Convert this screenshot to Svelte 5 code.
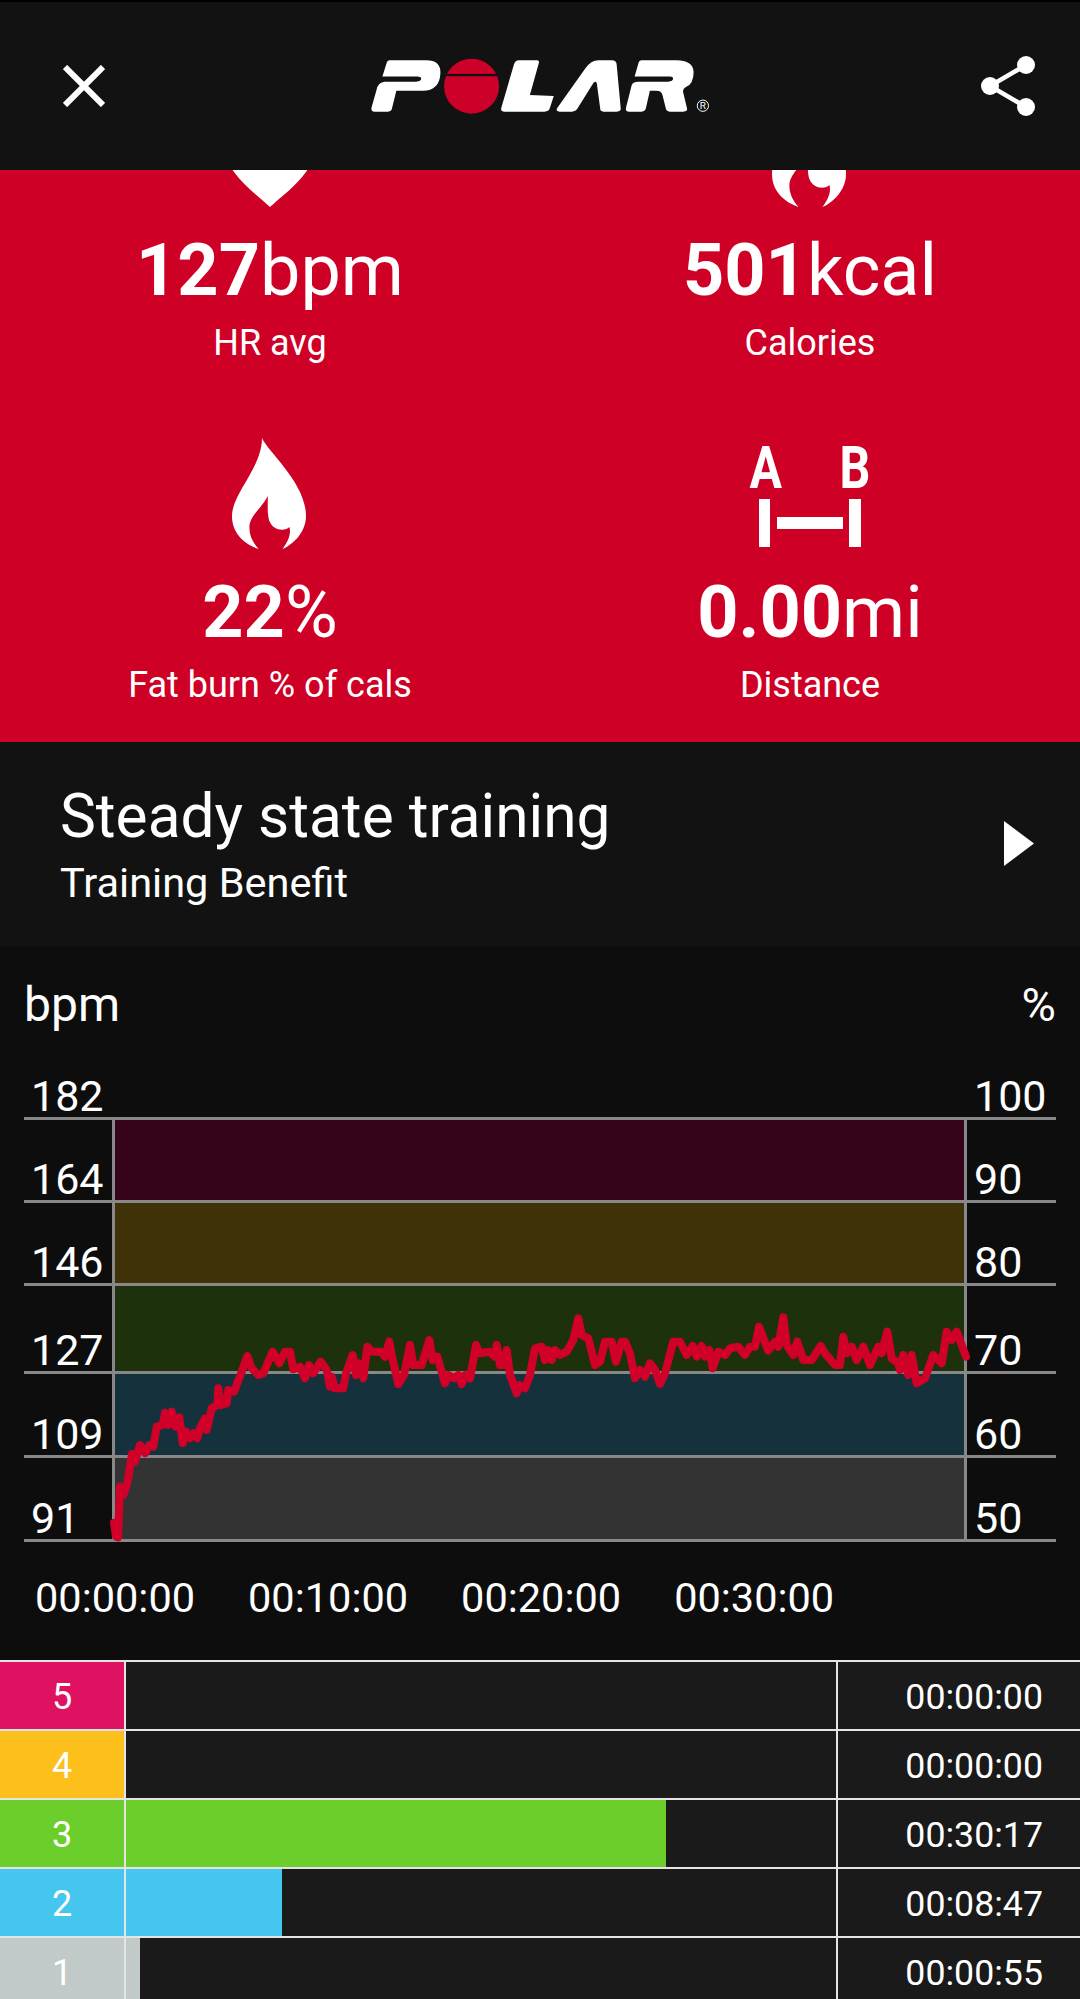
<script>
  const trace = (ox, oy, pts) => pts.map(([x, y]) => `${(ox + x / 3).toFixed(1)},${(oy + y / 3).toFixed(1)}`);
  const line = [
    ...trace(110, 1330, [[12,578],[18,620],[24,622],[30,470],[40,495],[52,460],[66,372],[75,395],[90,345],[105,370],[118,345],[130,350],[140,290],[158,285],[165,248],[175,285],[185,245],[197,290],[208,262],[218,340],[228,305],[240,325],[250,310],[262,325],[270,295],[285,265],[290,300],[305,235],[322,225],[325,175],[333,225],[350,220],[355,180],[372,185],[395,125],[412,78],[425,115],[445,135],[460,130],[488,65],[508,100],[525,65],[540,65],[550,118],[570,110],[585,145],[597,105],[610,130],[632,95],[650,120],[660,170]]),
    ...trace(330, 1310, [[5,200],[15,235],[40,235],[48,190],[68,135],[78,195],[88,160],[100,205],[112,110],[125,125],[155,125],[165,140],[178,95],[188,150],[205,222],[222,195],[240,105],[250,165],[275,165],[298,90],[308,150],[322,140],[345,220],[355,195],[372,205],[385,195],[395,222],[405,195],[420,205],[438,105],[448,130],[478,125],[495,140],[500,105],[510,165],[520,165],[530,120],[540,195],[560,250],[568,225],[585,235],[600,195],[615,115],[635,110],[645,150],[655,120],[665,150],[675,120],[690,135],[710,125],[730,90],[745,25],[755,75],[775,85],[795,165],[810,155],[825,95],[845,95],[858,155],[875,95],[885,95],[900,130],[915,205],[930,180],[945,200],[960,160]]),
    ...trace(650, 1310, [[15,180],[30,222],[45,190],[70,95],[90,95],[110,135],[128,108],[140,140],[155,108],[165,140],[178,120],[188,175],[205,125],[225,135],[240,115],[265,110],[285,135],[300,110],[315,110],[327,50],[355,122],[375,95],[385,110],[400,22],[410,105],[430,135],[442,95],[460,150],[485,150],[512,108],[525,130],[555,165],[570,165],[580,80],[590,130],[605,110],[620,150],[640,110],[660,165],[685,110],[695,130],[712,65],[725,145],[745,160],[750,180],[760,135],[775,195],[785,135],[800,220],[825,205],[850,135],[875,160],[890,65],[905,90],[920,65],[948,140]])
  ].join(' ');

  const bands = [
    { left: '164', right: '90', color: '#35041a', h: 83 },
    { left: '146', right: '80', color: '#3f3209', h: 83 },
    { left: '127', right: '70', color: '#1c310c', h: 88 },
    { left: '109', right: '60', color: '#14313c', h: 84 },
    { left: '91', right: '50', color: '#333333', h: 84 }
  ];
  const ticks = ['00:00:00', '00:10:00', '00:20:00', '00:30:00'];
  const zones = [
    { n: 5, color: '#de1260', pct: 0, time: '00:00:00' },
    { n: 4, color: '#fcbf1c', pct: 0, time: '00:00:00' },
    { n: 3, color: '#6cce2a', pct: 76, time: '00:30:17' },
    { n: 2, color: '#45c6ef', pct: 22, time: '00:08:47' },
    { n: 1, color: '#c2cac9', pct: 2, time: '00:00:55' }
  ];
  const flame = 'M30 0C36 14 74 45 74 78C74 95 60 107 50.5 111C57 102 59 96 57.5 89C54 93 41 94 37 82C35 74 36 66 35.8 58C30 70 17 78 17.4 90C17.5 98 21 105 26.6 111C12 106 0 95 0 78C0 55 30 30 30 0Z';
  const heart = 'M50 111C38 100 24 90 14 76C0 55 0 30 20 20C35 14 45 22 50 30C55 22 65 14 80 20C100 30 100 55 86 76C76 90 62 100 50 111Z';
</script>

<div class="page">
  <header class="top">
    <svg class="close" viewBox="0 0 42 42" aria-label="Close">
      <path d="M2 2L40 40M40 2L2 40" />
    </svg>
    <svg class="logo" viewBox="85 50 1030 175" aria-label="Polar">
      <path class="w" d="M145 60L255 60Q300 60 298 100Q295 152 245 152L165 152L152 205Q150 215 140 215L100 215Q88 215 90 203L105 150Q110 126 130 125L225 125Q240 123 240 116Q240 109 228 109L123 109L135 70Q138 60 145 60Z" />
      <circle class="o" cx="392" cy="138" r="83" />
      <rect class="slit" x="300" y="101" width="180" height="7" />
      <path class="w" d="M535 60L590 60Q597 60 595 68L568 165L640 168L628 205Q625 215 612 215L492 215Q478 215 482 202L520 72Q524 60 535 60Z" />
      <path class="w" d="M650 205L735 85Q752 60 775 60L815 60Q830 60 830 75L842 205Q843 215 830 215L790 215Q780 215 780 205L770 130Q768 120 760 128L712 205Q706 215 695 215L658 215Q645 215 650 205Z" />
      <path class="w" d="M905 60L1010 60Q1060 60 1062 95Q1062 130 1040 140Q1030 145 1030 155L1042 205Q1045 215 1030 215L990 215Q980 215 978 205L968 165Q965 152 950 152L930 152L918 205Q915 215 905 215L868 215Q855 215 858 203L875 135Q880 125 895 125L985 125Q1000 123 1000 116Q1000 109 990 109L884 109L895 70Q898 60 905 60Z" />
      <circle class="reg" cx="1090" cy="197" r="17" />
      <text class="regt" x="1090" y="208" text-anchor="middle">R</text>
    </svg>
    <svg class="share" viewBox="0 0 54 60" aria-label="Share">
      <path d="M45 9L9 30L45 51" />
      <circle cx="45" cy="9" r="9" />
      <circle cx="9" cy="30" r="9" />
      <circle cx="45" cy="51" r="9" />
    </svg>
  </header>

  <section class="stats">
    <div class="grid">
      <div class="stat">
        <div class="icon"><svg width="100" height="111" viewBox="0 0 100 111"><path d={heart} /></svg></div>
        <div class="val"><b>127</b>bpm</div>
        <div class="lab">HR avg</div>
      </div>
      <div class="stat">
        <div class="icon"><svg class="fl" width="74" height="111" viewBox="0 0 74 111"><path d={flame} /></svg></div>
        <div class="val"><b>501</b>kcal</div>
        <div class="lab">Calories</div>
      </div>
      <div class="stat">
        <div class="icon"><svg class="fl" width="74" height="111" viewBox="0 0 74 111"><path d={flame} /></svg></div>
        <div class="val"><b>22</b>%</div>
        <div class="lab">Fat burn % of cals</div>
      </div>
      <div class="stat">
        <div class="icon ab">
          <div class="abt"><span>A</span><span>B</span></div>
          <svg width="102" height="48" viewBox="0 0 102 48">
            <rect x="0" y="0" width="11" height="48" />
            <rect x="18" y="18" width="66" height="12" />
            <rect x="90" y="0" width="12" height="48" />
          </svg>
        </div>
        <div class="val"><b>0.00</b>mi</div>
        <div class="lab">Distance</div>
      </div>
    </div>
  </section>

  <section class="benefit">
    <div>
      <div class="title">Steady state training</div>
      <div class="sub">Training Benefit</div>
    </div>
    <svg class="play" width="30" height="45" viewBox="0 0 30 45"><path d="M0 0L30 22.5L0 45Z" /></svg>
  </section>

  <section class="chart">
    <div class="units"><span>bpm</span><span class="pc">%</span></div>
    <div class="plot">
      <div class="head"><span>182</span><span class="r">100</span></div>
      {#each bands as b}
        <div class="row" style:height="{b.h}px">
          <span class="l">{b.left}</span>
          <div class="band" style:background={b.color}></div>
          <span class="l rr">{b.right}</span>
        </div>
      {/each}
      <svg class="trace" width="870" height="250" viewBox="110 1300 870 250">
        <polyline points={line} />
      </svg>
    </div>
    <div class="ticks">
      {#each ticks as t}<span>{t}</span>{/each}
    </div>
  </section>

  <section class="zones">
    {#each zones as z}
      <div class="zone">
        <div class="num" style:background={z.color}>{z.n}</div>
        <div class="track"><div class="bar" style:width="{z.pct}%" style:background={z.color}></div></div>
        <div class="time">{z.time}</div>
      </div>
    {/each}
  </section>
</div>

<style>
  :global(body) { margin: 0; background: #0d0d0d; }
  .page {
    width: 1080px; height: 1999px; overflow: hidden; background: #0d0d0d; color: #fff;
    font-family: Roboto, "Liberation Sans", sans-serif;
  }
  .top {
    height: 168px; border-top: 2px solid #000; background: #121212;
    display: grid; grid-template-columns: 1fr auto 1fr; align-items: center;
  }
  .close { width: 42px; height: 42px; margin-left: 63px; }
  .close path { stroke: #fff; stroke-width: 6; fill: none; }
  .logo { width: 343px; height: 58px; }
  .w { fill: #fff; }
  .o { fill: #cc0028; }
  .slit { fill: #121212; }
  .reg { fill: none; stroke: #fff; stroke-width: 3; }
  .regt { fill: #fff; font-size: 30px; font-family: Roboto, sans-serif; }
  .share { width: 54px; height: 60px; justify-self: end; margin-right: 45px; }
  .share path { stroke: #fff; stroke-width: 4.5; fill: none; }
  .share circle { fill: #fff; }

  .stats { height: 572px; background: #cf0026; overflow: hidden; }
  .grid { display: grid; grid-template-columns: 1fr 1fr; grid-auto-rows: 342px; margin-top: -112px; }
  .stat { display: flex; flex-direction: column; align-items: center; }
  .icon { height: 111px; margin-top: 38px; display: flex; justify-content: center; }
  .icon svg path, .icon svg rect { fill: #fff; }
  .fl { margin-right: 3px; }
  .ab { flex-direction: column; align-items: center; }
  .abt {
    width: 128px; display: flex; justify-content: space-between; height: 54px;
    font-size: 59px; font-weight: 700; line-height: 54px; margin-bottom: 4px;
  }
  .abt span { display: inline-block; transform: scaleX(.82); }
  .val { font-size: 72px; line-height: 82px; margin-top: 23px; white-space: nowrap; }
  .val b { font-weight: 700; }
  .lab { font-size: 36px; line-height: 40px; margin-top: 11px; }

  .benefit {
    height: 205px; box-sizing: border-box; background: #121212; padding: 42px 46px 0 60px;
    display: flex; justify-content: space-between; align-items: flex-start;
  }
  .title { font-size: 60.4px; line-height: 66px; }
  .sub { font-size: 41.5px; line-height: 46px; margin-top: 10px; }
  .play { margin-top: 37px; fill: #fff; }

  .chart { height: 713px; padding: 0 24px; box-sizing: border-box; position: relative; }
  .units { display: flex; justify-content: space-between; font-size: 48px; line-height: 52px; padding-top: 32px; }
  .units .pc { font-size: 47px; }
  .plot { position: relative; margin-top: 16px; }
  .head { height: 70px; border-bottom: 3px solid #888; display: flex; justify-content: space-between; align-items: flex-end; font-size: 43px; line-height: 41px; padding-left: 7px; }
  .head .r { width: 82px; }
  .row { display: flex; border-bottom: 3px solid #888; box-sizing: border-box; }
  .l { width: 81px; padding-left: 7px; font-size: 43px; line-height: 41px; align-self: flex-end; }
  .rr { width: 82px; }
  .band { flex: 1; border-left: 3px solid #888; border-right: 3px solid #888; }
  .trace { position: absolute; left: 86px; bottom: -8px; overflow: visible; }
  .trace polyline { fill: none; stroke: #d00028; stroke-width: 8; stroke-linejoin: round; stroke-linecap: round; }
  .ticks { display: flex; gap: 53px; font-size: 41.5px; line-height: 48px; padding: 32px 0 0 11px; }

  .zones { background: #1a1a1a; }
  .zone {
    height: 69px; box-sizing: border-box; border-top: 2px solid #e4e4e4;
    display: grid; grid-template-columns: 124px 714px 1fr;
  }
  .num { font-size: 36px; display: flex; align-items: center; justify-content: center; padding-top: 3px; }
  .track { border-left: 2px solid #e4e4e4; border-right: 2px solid #e4e4e4; }
  .bar { height: 100%; }
  .time { font-size: 35.7px; display: flex; align-items: center; justify-content: flex-end; padding: 3px 37px 0 0; }
</style>
